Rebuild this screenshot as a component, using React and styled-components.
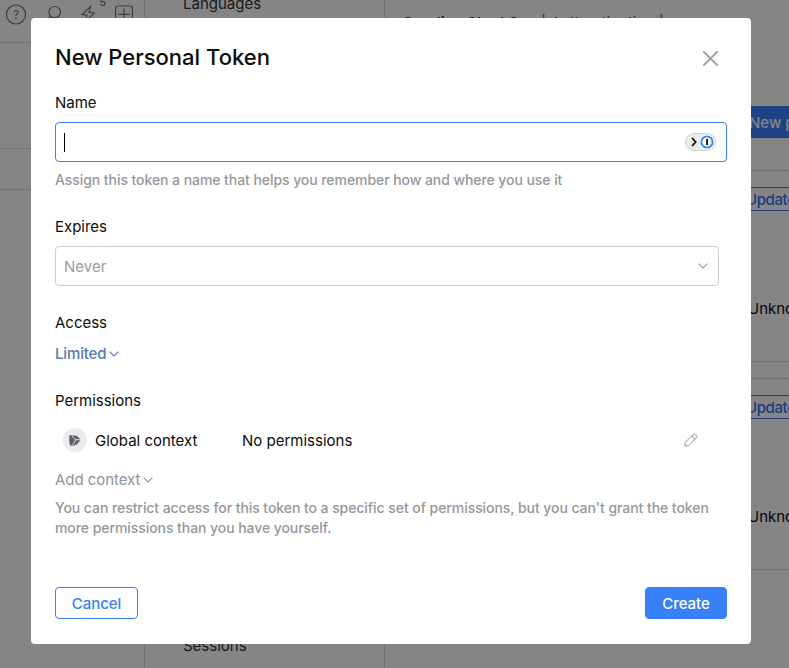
import React from "react";
import styled, { createGlobalStyle } from "styled-components";

const GlobalStyle = createGlobalStyle`
  * { box-sizing: border-box; }
  body {
    margin: 0;
    overflow: hidden;
    background: #fff;
    color: #0c0c0d;
    font-family: Inter, "Liberation Sans", sans-serif;
    font-size: 15px;
    line-height: 20px;
  }
  button { font: inherit; padding: 0; cursor: pointer; }
`;

const Page = styled.div`
  display: grid;
  grid-template-columns: 145px 240px 1fr;
  height: 668px;
  overflow: hidden;
`;

const Sidebar = styled.aside`
  border-right: 1px solid #dcdce4;
`;

const Toolbar = styled.div`
  height: 43px;
  border-bottom: 1px solid #dcdce4;
  display: flex;
  color: #77787d;
`;

const SidebarRow = styled.div`
  height: ${(p) => p.$height}px;
  border-bottom: 1px solid #dcdce4;
`;

const Settings = styled.nav`
  border-right: 1px solid #dcdce4;
  display: flex;
  flex-direction: column;
  justify-content: space-between;
  padding: 0 0 12px 38px;
  margin-top: -6px;
  height: 674px;
  color: #333;
`;

const Main = styled.main`
  padding: 13px 0 0 17px;
  white-space: nowrap;
  overflow: hidden;
`;

const Crumbs = styled.div`
  height: 20px;
  font-size: 15px;
  letter-spacing: 0.1px;
  color: #555;
  b { color: #2b4470; font-weight: 600; }
`;

const NewButton = styled.button`
  display: block;
  width: 160px;
  height: 32px;
  margin: 73px 0 32px 332px;
  padding: 1px 0 0 15px;
  text-align: left;
  border: 0;
  border-radius: 4px;
  background: #3880ff;
  color: #fff;
  font-weight: 500;
`;

const TokenCard = styled.section`
  height: 192px;
  margin-bottom: 16px;
  padding: 16px 0 0 329px;
  border: solid #dcdce4;
  border-width: 1px 0;
`;

const UpdateButton = styled.button`
  display: block;
  width: 90px;
  height: 24px;
  padding: 1px 0 0 14px;
  text-align: left;
  line-height: 22px;
  border: 1px solid #3880ff;
  border-radius: 4px;
  background: #fff;
  color: #3574f0;
  font-weight: 500;
  letter-spacing: -0.4px;
`;

const TokenState = styled.div`
  margin: 88px 0 0 17px;
`;

const Overlay = styled.div`
  position: fixed;
  inset: 0;
  background: rgba(0, 0, 0, 0.48);
  padding: 18px 0 0 31px;
`;

const Dialog = styled.div`
  width: 720px;
  height: 626px;
  padding: 24px;
  border-radius: 4px;
  background: #fff;
  display: flex;
  flex-direction: column;
`;

const Header = styled.header`
  display: flex;
  justify-content: space-between;
  height: 32px;
  margin-bottom: 19px;
`;

const Title = styled.h1`
  margin: 0;
  font-size: 22px;
  line-height: 31px;
  font-weight: 500;
  letter-spacing: 0;
`;

const CloseButton = styled.button`
  width: 18px;
  height: 18px;
  margin: 7px 8px 0 0;
  border: 0;
  background: none;
  color: #98999c;
  svg { display: block; }
`;

const Label = styled.div`
  flex: none;
  height: 20px;
  margin: ${(p) => p.$top ?? 0}px 0 ${(p) => p.$gap ?? 9}px;
  letter-spacing: -0.02px;
`;

const NameField = styled.div`
  height: 40px;
  padding: 0 10px 0 8px;
  border: 1px solid #3880ff;
  border-radius: 4px;
  display: flex;
  flex: none;
  align-items: center;
  justify-content: space-between;
`;

const Caret = styled.span`
  width: 1px;
  height: 19px;
  background: #000;
`;

const Hint = styled.p`
  margin: ${(p) => p.$top}px 0 0;
  font-size: 14px;
  line-height: 20px;
  font-weight: 500;
  letter-spacing: -0.065px;
  color: #96979b;
  white-space: pre-line;
`;

const Select = styled.div`
  width: 664px;
  height: 40px;
  flex: none;
  margin-bottom: 27px;
  padding: 0 10px 0 8px;
  border: 1px solid #ccccce;
  border-radius: 4px;
  color: #9c9da1;
  display: flex;
  align-items: center;
  justify-content: space-between;
  span { padding-top: 2px; }
`;

const DropdownLink = styled.button`
  display: flex;
  align-items: center;
  gap: 3px;
  height: 20px;
  margin-bottom: ${(p) => p.$gap}px;
  border: 0;
  background: none;
  color: ${(p) => p.$color};
  font-weight: ${(p) => p.$weight};
  letter-spacing: ${(p) => p.$tracking}px;
  svg { margin-bottom: 1px; }
`;

const Permission = styled.div`
  display: grid;
  grid-template-columns: 32px 147px 1fr 43px;
  align-items: center;
  height: 24px;
  padding-left: 8px;
  margin: 8px 0 18px;
  svg { display: block; }
  span { padding-top: 2px; }
`;

const Footer = styled.footer`
  display: flex;
  justify-content: space-between;
  margin: auto 0 1px;
`;

const ActionButton = styled.button`
  width: ${(p) => (p.$primary ? 82 : 83)}px;
  height: 32px;
  padding-top: 2px;
  border: 1px solid #3880f8;
  border-radius: 4px;
  background: ${(p) => (p.$primary ? "#3880f8" : "#fff")};
  color: ${(p) => (p.$primary ? "#fff" : "#3880f8")};
  font-weight: 500;
  letter-spacing: -0.05px;
`;

const Chevron = () => (
  <svg width="10" height="6" viewBox="0 0 10 6" fill="none" stroke="currentColor" strokeWidth="1.1">
    <path d="M.6.7 5 5 9.4.7" />
  </svg>
);

const ToolbarIcons = () => (
  <svg width="144" height="30" viewBox="0 0 144 30" fill="none" stroke="currentColor" strokeWidth="1.2">
    <circle cx="16" cy="14.5" r="9.5" />
    <text x="16" y="19" fontSize="12" textAnchor="middle" fill="currentColor" stroke="none">?</text>
    <circle cx="54.7" cy="12.2" r="5.7" />
    <path d="m50.6 16.2-5 5M90.5 6.6 82 14.5l5 .7-1.7 6.3 9-8.4-5.3-.8z" />
    <text x="102.8" y="6" fontSize="10.5" fontWeight="600" textAnchor="middle" fill="currentColor" stroke="none">5</text>
    <rect x="115.6" y="6" width="16.8" height="16.8" rx="2.5" />
    <path d="M124 8.5v11.8M118.2 14.4h11.6" />
  </svg>
);

const PasswordPill = () => (
  <svg width="31" height="18" viewBox="0 0 31 18" fill="none">
    <rect x=".5" y=".5" width="30" height="17" rx="8.5" fill="#ececec" stroke="#d2d2d2" />
    <path d="m7 5 3.700 4L7 13" stroke="#111" strokeWidth="1.8" />
    <circle cx="22" cy="9" r="7.6" fill="#fff" />
    <circle cx="22" cy="9" r="5.6" fill="#fff" stroke="#3b8df5" strokeWidth="2" />
    <path d="M22 6v6" stroke="#222" strokeWidth="2" />
  </svg>
);

const ContextIcon = () => (
  <svg width="24" height="24" viewBox="0 0 24 24">
    <circle cx="12" cy="12" r="12" fill="#ebebec" />
    <path d="M6.300 8.200Q6.700 6.700 8.300 6.900L13.500 7.800Q14.500 8 15.200 9L17.200 11.500q.4.500 0 1L14.600 15.700q-.5.700-1.300 1L9 18.100q-1.500.3-2-1Q5.800 12.500 6.300 8.200Z" fill="#5b5e6a" />
    <path d="M8.800 7q1.500 3.500 4 4.600l5 .3M8.500 17.800q3-2.300 4.300-6.200" fill="none" stroke="#ebebec" strokeWidth=".9" />
  </svg>
);

const Pencil = () => (
  <svg width="14" height="14" viewBox="0 0 14 14" fill="none" stroke="#929397" strokeWidth="1">
    <path d="M1 13v-3.400L9.300 1.300q1-.9 2.100 0l1.200 1.200q.9 1.100 0 2.100L4.300 12.900zM8 2.700q.2 2.800 3.100 3.300" />
  </svg>
);

export default function App() {
  return (
    <>
      <GlobalStyle />
      <Page>
        <Sidebar>
          <Toolbar><ToolbarIcons /></Toolbar>
          <SidebarRow $height={106} />
          <SidebarRow $height={41} />
        </Sidebar>
        <Settings>
          <span>Languages</span>
          <span>Sessions</span>
        </Settings>
        <Main>
          <Crumbs><b>Caroline Steel Cox</b> | Authentication |</Crumbs>
          <NewButton>New personal token</NewButton>
          {[1, 2].map((id) => (
            <TokenCard key={id}>
              <UpdateButton>Update</UpdateButton>
              <TokenState>Unknown</TokenState>
            </TokenCard>
          ))}
        </Main>
      </Page>
      <Overlay>
        <Dialog role="dialog" aria-label="New Personal Token">
          <Header>
            <Title>New Personal Token</Title>
            <CloseButton aria-label="Close">
              <svg width="18" height="18" viewBox="0 0 18 18" stroke="currentColor" strokeWidth="1.7">
                <path d="m2.300 2.300 14.400 14.400M16.700 2.300 2.300 16.700" />
              </svg>
            </CloseButton>
          </Header>
          <Label>Name</Label>
          <NameField><Caret /><PasswordPill /></NameField>
          <Hint $top={8}>Assign this token a name that helps you remember how and where you use it</Hint>
          <Label $top={27}>Expires</Label>
          <Select><span>Never</span><Chevron /></Select>
          <Label $gap={11}>Access</Label>
          <DropdownLink $color="#5679b0" $weight={500} $tracking={-0.15} $gap={27}>Limited<Chevron /></DropdownLink>
          <Label>Permissions</Label>
          <Permission>
            <ContextIcon />
            <span>Global context</span>
            <span>No permissions</span>
            <Pencil />
          </Permission>
          <DropdownLink $color="#929397" $weight={400} $tracking={-0.06} $gap={0}>Add context<Chevron /></DropdownLink>
          <Hint $top={8}>{"You can restrict access for this token to a specific set of permissions, but you can't grant the token\nmore permissions than you have yourself."}</Hint>
          <Footer>
            <ActionButton>Cancel</ActionButton>
            <ActionButton $primary>Create</ActionButton>
          </Footer>
        </Dialog>
      </Overlay>
    </>
  );
}
